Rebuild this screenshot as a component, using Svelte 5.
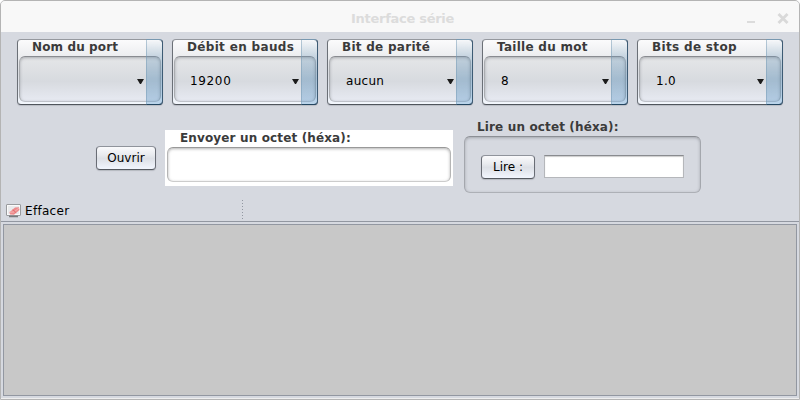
<script>
  const settings = [
    { label: 'Nom du port', value: '', spacing: 0.12 },
    { label: 'Débit en bauds', value: '19200', spacing: 0.33 },
    { label: 'Bit de parité', value: 'aucun', spacing: 0.27 },
    { label: 'Taille du mot', value: '8', spacing: 0.27 },
    { label: 'Bits de stop', value: '1.0', spacing: 0.33 }
  ];
</script>

<div class="window">
  <header class="titlebar">
    <span class="title">Interface série</span>
    <div class="controls">
      <svg width="8" height="3" viewBox="0 0 8 3"><rect width="8" height="2" fill="#dcdcdc" /></svg>
      <svg width="12" height="11" viewBox="0 0 12 11"><path d="M1.5 1L10.5 10M10.5 1L1.5 10" stroke="#d9d9d9" stroke-width="2.8" /></svg>
    </div>
  </header>

  <div class="settings">
    {#each settings as s}
      <div class="combo">
        <div class="label" style="letter-spacing: {s.spacing}px">{s.label}</div>
        <div class="field">
          <span class:digits={s.value === '19200'}>{s.value}</span>
          <svg width="7" height="5" viewBox="0 0 7 5"><path d="M0 0H7L4 5H3Z" fill="#1b1b1b" /></svg>
        </div>
        <div class="strip"></div>
      </div>
    {/each}
  </div>

  <div class="actions">
    <button class="open">Ouvrir</button>
    <div class="send">
      <div class="label">Envoyer un octet (héxa):</div>
      <div class="sendbox"></div>
    </div>
    <div class="read">
      <div class="label">Lire un octet (héxa):</div>
      <div class="readbox">
        <button>Lire :</button>
        <div class="textfield"></div>
      </div>
    </div>
  </div>

  <div class="toolbar">
    <svg width="16" height="15" viewBox="0 0 16 15">
      <rect x="0.5" y="0.5" width="14" height="11" rx="0.5" fill="#e9eaec" stroke="#999b9e" />
      <rect x="1.5" y="1.5" width="12" height="9" fill="none" stroke="#fafafa" />
      <path d="M3 12.5H12" stroke="#777a7d" stroke-width="1.4" />
      <path d="M3.5 8.2L9 3.5L13 3.2L13.5 6L8 10.7L4 10.6Z" fill="#ed8a8c" />
      <path d="M3.5 8.2L8 8L13 4" fill="none" stroke="#f6b4b3" />
      <path d="M6.7 5.7L10.2 8.8" stroke="#e06d70" />
    </svg>
    <span>Effacer</span>
    <i class="separator"></i>
  </div>
  <div class="output"></div>
</div>

<style>
  :global(body) { background: #fff; }
  .window {
    box-sizing: border-box;
    width: 800px;
    height: 400px;
    display: flex;
    flex-direction: column;
    overflow: hidden;
    border: 1px solid #b4b4b4;
    border-radius: 5px 5px 0 0;
    background: #d6d9e0;
    box-shadow: inset 0 -1px #eee;
    color: #000;
    font: 12px/14px "DejaVu Sans", sans-serif;
  }
  .titlebar {
    height: 31px;
    flex: none;
    display: flex;
    background: #f8f8f8;
    box-sizing: border-box;
    padding: 11px 10px 0 350px;
    justify-content: space-between;
  }
  .title { font-weight: bold; font-size: 13px; letter-spacing: -0.28px; color: #dcdcdc; white-space: nowrap; }
  .controls { display: flex; gap: 22px; }
  .controls svg:first-child { margin-top: 9px; }
  .controls svg:last-child { margin-top: 1px; }
  .label { font-weight: bold; color: #3b3b3b; white-space: nowrap; height: 14px; letter-spacing: 0.14px; }
  .settings { display: flex; gap: 9px; padding: 7px 0 0 16px; flex: none; }
  .combo {
    position: relative;
    box-sizing: border-box;
    width: 146px;
    height: 66px;
    padding: 0 1px;
    border: 1px solid #777b82;
    border-color: #95989e #6b7077 #50555c;
    border-radius: 4px;
    background: linear-gradient(#fbfbfc, #eeeff1 22%, #d9dbe0 52%, #e0e4ec 70%, #f3f7fd);
    box-shadow: 0 1px 1px #b9bcc4;
  }
  .combo .label { padding-left: 13px; }
  .field {
    box-sizing: border-box;
    height: 46px;
    margin-top: 2px;
    display: flex;
    justify-content: space-between;
    align-items: flex-start;
    padding: 17px 16px 0 16px;
    border: 1px solid;
    border-color: #898b90 #aaacb0 #bfc2c9;
    border-radius: 6px;
    background: linear-gradient(#e5e6e8, #d7dadf 55%, #e7eaf2);
    box-shadow: inset 0 1px 3px #85888ea0;
  }
  .field span { letter-spacing: 0.3px; }
  .field .digits { margin-left: -1px; letter-spacing: 0.65px; }
  .field svg { margin-top: 5px; }
  .strip {
    position: absolute;
    top: -1px;
    right: -1px;
    width: 17px;
    height: 66px;
    box-sizing: border-box;
    border: 1px solid;
    border-color: #7898b0 #3d5b74 #244661 #7599b480;
    border-radius: 0 4px 4px 0;
    background: linear-gradient(#6c9bc008, #6898bc48 26%, #4885b45c 60%, #5798cc5c);
  }
  .actions { display: flex; height: 92px; flex: none; box-sizing: border-box; padding: 15px 0 0 95px; }
  button {
    box-sizing: border-box;
    height: 24px;
    padding: 0;
    border: 1px solid;
    border-color: #8f939b #696d75 #555960;
    border-radius: 4px;
    background: linear-gradient(#fafafc, #e9ebef 35%, #dde0e6 52%, #f2f6fe);
    box-shadow: 0 1px 1px #b5b8bf;
    font: inherit;
    color: #000;
  }
  .open { width: 60px; margin-top: 26px; }
  .send { box-sizing: border-box; width: 288px; height: 56px; margin: 10px 0 0 9px; padding: 1px 2px; background: #fff; }
  .send .label { padding-left: 13px; }
  .sendbox {
    box-sizing: border-box;
    height: 35px;
    margin-top: 2px;
    border: 1px solid;
    border-color: #999 #b5b5b5 #ccc;
    border-radius: 6px;
    box-shadow: inset 0 1px 3px #999b;
  }
  .read { width: 237px; margin-left: 11px; }
  .read .label { padding-left: 13px; }
  .readbox {
    box-sizing: border-box;
    height: 57px;
    margin-top: 2px;
    padding: 18px 0 0 16px;
    display: flex;
    gap: 9px;
    border: 1px solid;
    border-color: #8c8f95 #a4a7ad #adb0b6;
    border-radius: 6px;
    box-shadow: inset 0 1px 3px #85888ea0;
  }
  .readbox button { width: 54px; }
  .textfield {
    box-sizing: border-box;
    width: 140px;
    height: 23px;
    border: 1px solid;
    border-color: #898b8f #b5b7bb #b5b7bb;
    background: #fff;
    box-shadow: inset 0 1px 1px #ccc;
  }
  .toolbar {
    box-sizing: border-box;
    height: 25px;
    flex: none;
    display: flex;
    padding: 7px 0 0 5px;
    border-bottom: 1px solid #9297a1;
  }
  .toolbar svg { margin-right: 3px; flex: none; }
  .toolbar span { width: 217px; letter-spacing: 0.3px; }
  .separator {
    width: 1px;
    height: 19px;
    margin-top: -4px;
    background: repeating-linear-gradient(#9297a1 0 1px, transparent 1px 3px);
  }
  .output { box-sizing: border-box; flex: 1; margin: 2px 2px 3px; border: 1px solid #9297a1; background: #c8c8c8; }
</style>
